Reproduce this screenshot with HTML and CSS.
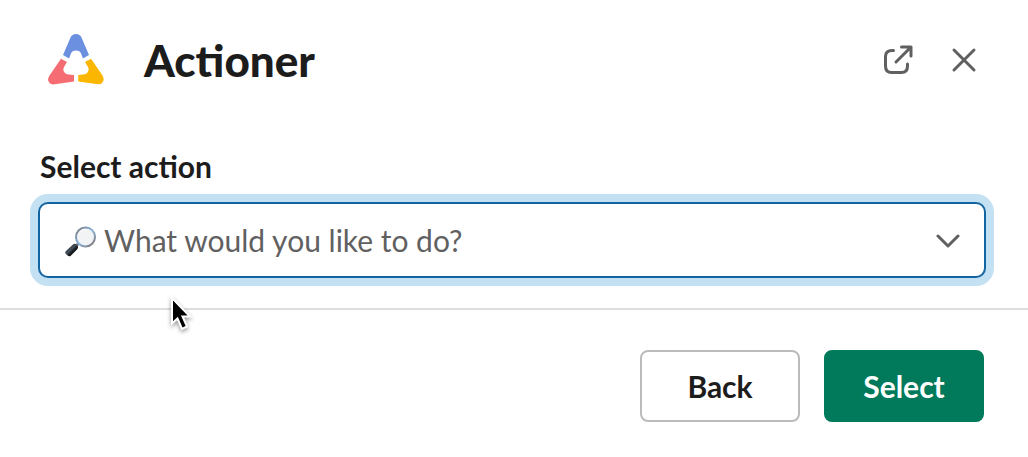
FILE: index.html
```html
<!DOCTYPE html>
<html lang="en">
<head>
<meta charset="utf-8">
<meta name="viewport" content="width=device-width, initial-scale=1">
<title>Actioner</title>
<link rel="stylesheet" href="styles.css">
</head>
<body>
<form class="dialog">
  <header class="dialog-header">
    <svg class="logo" viewBox="0 0 56 52" aria-hidden="true">
      <path fill="#6b90e0" d="M22.500 3.500Q24 0 28 0Q32 0 33.500 3.500L41 21L35 24.500L33 19.500Q32 16.500 28 16.500Q24 16.500 23 19.500L21 24.500L15 21Z"/>
      <path fill="#f56d72" d="M13 24.700L19 28L16 33Q14.500 36 16.500 38.500Q18 40.300 20.500 40.500L26 41V47.500L5 50.500Q1 50 0 46Q0 44 1.500 41.500Z"/>
      <path fill="#fab600" d="M43 24.700L54.500 41.500Q57 46 54 49Q52.500 50.500 50 50.300L30.300 47.500V41L35.500 40.500Q38 40.300 39.500 38.500Q41.500 36 40 33L37 28Z"/>
    </svg>
    <h1 class="title">Actioner</h1>
    <button class="icon-button" type="button" aria-label="Open in new window">
      <svg class="icon" viewBox="0 0 32 32" aria-hidden="true">
        <path d="M11.500 6.500H10C5.500 6.500 3.500 8.500 3.500 12.500V22C3.500 26.500 5.500 28.500 9.500 28.500H19.500C23.500 28.500 25.500 26.500 25.500 22V20"/>
        <path d="M14 18L29 3M19.500 3H29V12"/>
      </svg>
    </button>
    <button class="icon-button" type="button" aria-label="Close">
      <svg class="icon" viewBox="0 0 32 32" aria-hidden="true">
        <path d="M6 6L26 26M26 6L6 26"/>
      </svg>
    </button>
  </header>
  <div class="dialog-body">
    <label class="label" for="action">Select action</label>
    <div class="select-wrap">
      <select class="select" id="action">
        <option>What would you like to do?</option>
      </select>
      <svg class="search-icon" viewBox="0 0 32 32" aria-hidden="true">
        <defs>
          <linearGradient id="rim" x1="0" y1="0" x2="1" y2="1">
            <stop offset="0" stop-color="#777b82"/>
            <stop offset=".5" stop-color="#8cb5df"/>
            <stop offset="1" stop-color="#7c706a"/>
          </linearGradient>
          <linearGradient id="handle" x1="0" y1="0" x2="1" y2="1">
            <stop offset="0" stop-color="#101317"/>
            <stop offset=".45" stop-color="#46515c"/>
            <stop offset=".6" stop-color="#15181c"/>
            <stop offset="1" stop-color="#050608"/>
          </linearGradient>
        </defs>
        <path d="M10 21L13.500 17.500" stroke="#777b82" stroke-width="3"/>
        <path d="M1 25L8 18.500Q10 17 12 19Q14 21 12 23.500L5.500 30Q4 31 2 29Q-1 27 1 25Z" fill="url(#handle)"/>
        <circle cx="20.500" cy="11" r="9.500" fill="#f2f3f5" stroke="url(#rim)" stroke-width="2"/>
        <path d="M13.500 8.500Q16 3.500 21 3.500" fill="none" stroke="#fff" stroke-width="1"/>
      </svg>
      <svg class="chevron" viewBox="0 0 24 16" aria-hidden="true">
        <path d="M2 3L12 13L22 3"/>
      </svg>
    </div>
  </div>
  <footer class="dialog-footer">
    <button class="button" type="button">Back</button>
    <button class="button button-primary" type="submit">Select</button>
  </footer>
</form>
<svg class="cursor" viewBox="0 0 28 40" aria-hidden="true">
  <path d="M4 4V29.500L9.500 24.500L14 35L19 32.500L14.500 22.500H22Z" fill="#000" stroke="#fff" stroke-width="2"/>
</svg>
</body>
</html>
```
FILE: styles.css
```css
* {
  box-sizing: border-box;
}

body {
  margin: 0;
  background: #fff;
  color: #1d1c1d;
  font-family: Lato, "Liberation Sans", sans-serif;
}

.dialog-header {
  display: flex;
  align-items: center;
  gap: 34px;
  padding: 28px 48px 26px;
}

.logo {
  width: 56px;
  height: 52px;
}

.title {
  flex: 1;
  margin: 0 0 0 6px;
  font-family: "Lato Black", Lato, "Liberation Sans", sans-serif;
  font-size: 44px;
  font-weight: 900;
  line-height: 64px;
}

.icon-button {
  display: flex;
  padding: 0;
  border: 0;
  background: none;
  color: #616061;
  cursor: pointer;
}

.icon {
  width: 32px;
  height: 32px;
  fill: none;
  stroke: currentColor;
  stroke-width: 3;
  stroke-linecap: round;
  stroke-linejoin: round;
}

.dialog-body {
  padding: 28px 42px 30px 38px;
}

.label {
  display: block;
  margin: 0 2px 16px;
  font-size: 30px;
  font-weight: 700;
  line-height: 40px;
}

.select-wrap {
  position: relative;
}

.select {
  display: block;
  appearance: none;
  width: 100%;
  height: 76px;
  padding: 0 64px;
  border: 2px solid #1264a3;
  border-radius: 10px;
  outline: none;
  background: #fff;
  box-shadow: 0 0 0 8px #c3e1f2;
  color: #616061;
  font: 400 30px/40px Lato, "Liberation Sans", sans-serif;
}

.search-icon {
  position: absolute;
  top: 24px;
  left: 27px;
  width: 32px;
  height: 32px;
  pointer-events: none;
}

.chevron {
  position: absolute;
  top: 31px;
  right: 26px;
  width: 24px;
  height: 16px;
  fill: none;
  stroke: #616061;
  stroke-width: 3;
  stroke-linecap: round;
  stroke-linejoin: round;
  pointer-events: none;
}

.dialog-footer {
  display: flex;
  justify-content: flex-end;
  gap: 24px;
  padding: 40px 44px 34px;
  border-top: 2px solid #ddd;
}

.button {
  min-width: 160px;
  height: 72px;
  padding: 0 24px;
  border: 2px solid #bbb;
  border-radius: 8px;
  background: #fff;
  color: #1d1c1d;
  font: 700 30px/40px Lato, "Liberation Sans", sans-serif;
  cursor: pointer;
}

.button-primary {
  border-color: #007a5a;
  background: #007a5a;
  color: #fff;
}

.cursor {
  position: absolute;
  top: 294px;
  left: 168px;
  width: 28px;
  height: 40px;
  filter: drop-shadow(0 2px 2px rgb(0 0 0 / 40%));
  pointer-events: none;
}
```
